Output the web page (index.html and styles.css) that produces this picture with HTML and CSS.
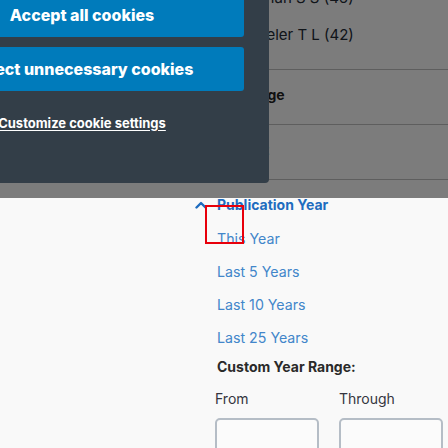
FILE: index.html
```html
<!DOCTYPE html>
<html lang="en">
<head>
<meta charset="utf-8">
<title>Filters</title>
<link rel="stylesheet" href="styles.css">
</head>
<body>
<div class="page">
  <aside class="facets">
    <div class="facet authors">
      <div class="facet-item">Shuman S S (46)</div>
      <div class="facet-item">Wheeler T L (42)</div>
    </div>
    <div class="facet">
      <div class="facet-head closed">
        <svg class="chev" width="12" height="8" viewBox="0 0 12 8"><polyline points="1.5,1.5 6,6 10.5,1.5" fill="none" stroke="currentColor" stroke-width="2.4" stroke-linecap="round" stroke-linejoin="round"/></svg>
        <span>Language</span>
      </div>
    </div>
    <div class="facet">
      <div class="facet-head closed">
        <svg class="chev" width="12" height="8" viewBox="0 0 12 8"><polyline points="1.5,1.5 6,6 10.5,1.5" fill="none" stroke="currentColor" stroke-width="2.4" stroke-linecap="round" stroke-linejoin="round"/></svg>
        <span>Subject</span>
      </div>
    </div>
    <div class="facet open">
      <div class="facet-head opened">
        <svg class="chev" width="12" height="8" viewBox="0 0 12 8"><polyline points="1.5,6.5 6,2 10.5,6.5" fill="none" stroke="currentColor" stroke-width="2.4" stroke-linecap="round" stroke-linejoin="round"/></svg>
        <span>Publication Year</span>
      </div>
      <ul class="year-links">
        <li>This Year</li>
        <li>Last 5 Years</li>
        <li>Last 10 Years</li>
        <li>Last 25 Years</li>
      </ul>
      <div class="custom-label">Custom Year Range:</div>
      <div class="range">
        <label class="range-field"><span>From</span><input type="text"></label>
        <label class="range-field"><span>Through</span><input type="text"></label>
      </div>
    </div>
  </aside>
</div>

<div class="overlay"></div>

<div class="cookie-panel">
  <button class="cookie-btn">Accept all cookies</button>
  <button class="cookie-btn">Reject unnecessary cookies</button>
  <a class="cookie-link" href="#">Customize cookie settings</a>
</div>

<div class="highlight"></div>
</body>
</html>
```

FILE: styles.css
```css
* { box-sizing: border-box; }

html, body {
  margin: 0;
  padding: 0;
  height: 100%;
  overflow: hidden;
}

body {
  background: #f9f9f9;
  font-family: Inter, "Noto Sans", "Liberation Sans", sans-serif;
  color: #2b2b2b;
  position: relative;
}

.page {
  display: flex;
  padding-left: 195px;
}

.facets {
  flex: 1;
  margin-top: -21px;
}

.facet {
  border-bottom: 1px solid #bdbdbd;
}

.facet.open {
  border-bottom: none;
}

.authors {
  padding-bottom: 16px;
}

.facet-item {
  padding: 8px 0 8px 39px;
  line-height: 21px;
  font-size: 15px;
  color: #222a35;
}

.facet-head {
  display: flex;
  align-items: center;
  gap: 10px;
  font-size: 14px;
  font-weight: 700;
  line-height: 20px;
}

.facet-head.closed {
  padding: 15px 0 19px;
  color: #222;
}

.facet-head.opened {
  padding-top: 15px;
  color: #1e6cbf;
  margin-bottom: 7.5px;
}

.chev { flex: none; }

.year-links {
  list-style: none;
  margin: 0;
  padding: 0 0 0 22px;
}

.year-links li {
  padding: 6.5px 0;
  line-height: 20px;
  font-size: 14.2px;
  color: #4286ca;
}

.custom-label {
  margin: 2.5px 0 0 22px;
  line-height: 20px;
  font-size: 14px;
  font-weight: 700;
  color: #2a2a2a;
}

.range {
  display: flex;
  gap: 20px;
  margin: 12px 0 0 20px;
}

.range-field {
  display: flex;
  flex-direction: column;
  gap: 9px;
  font-size: 14px;
  line-height: 20px;
  color: #353540;
}

.range-field input {
  width: 104px;
  height: 36px;
  border: 2px solid #b5bdc6;
  border-radius: 5px;
  background: #fbfbfb;
  font: inherit;
}

.overlay {
  position: absolute;
  left: 0;
  top: 0;
  width: 100%;
  height: 198px;
  background: rgba(0, 0, 0, 0.5);
}

.cookie-panel {
  position: absolute;
  left: -105px;
  top: -31px;
  width: 374px;
  height: 214px;
  padding: 24px 25px 0;
  background: #333e48;
  border-bottom-right-radius: 4px;
  display: flex;
  flex-direction: column;
  align-items: center;
  text-align: center;
}

.cookie-btn {
  width: 100%;
  height: 44px;
  border: none;
  border-radius: 3px;
  background: #007bbb;
  color: #fff;
  font-family: Inter, "Noto Sans", sans-serif;
  font-size: 16px;
  font-weight: 800;
  margin: 0 0 10px;
  padding: 0;
  white-space: nowrap;
}

.cookie-link {
  margin-top: 12.5px;
  color: #fff;
  font-size: 13px;
  font-weight: 700;
  line-height: 18px;
  text-decoration: underline;
  text-underline-offset: 2px;
}

.highlight {
  position: absolute;
  left: 205px;
  top: 205px;
  width: 39px;
  height: 39px;
  border: 2px solid #e8000b;
}
```
